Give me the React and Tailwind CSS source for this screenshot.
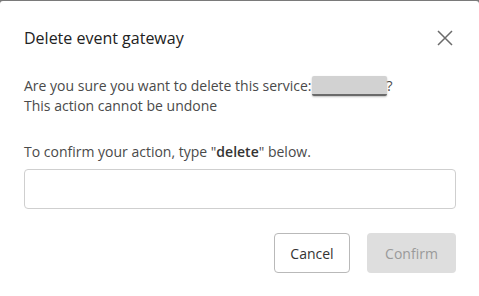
export default function App() {
  return (
    <div className="w-[479px] h-[296px] bg-[#7a7a7a] pt-px overflow-hidden" style={{ fontFamily: '"Open Sans", sans-serif' }}>
      <div className="h-[300px] bg-white rounded-[3px] pl-6 pr-[23px]">
        <div className="flex items-center justify-between h-[75px] pb-px">
          <h1 className="text-[16px] text-[#222] leading-none">Delete event gateway</h1>
          <button className="w-[16px] h-[16px] mr-[3px] flex items-center justify-center text-[#6b6b6b]">
            <svg width="16" height="16" viewBox="0 0 16 16" fill="none" stroke="currentColor" strokeWidth="1.5">
              <path d="M1 1L15 15M15 1L1 15" />
            </svg>
          </button>
        </div>
        <div className="text-[14px] leading-[20px] text-[#4a4a4a]">
          <p className="flex items-center">
            Are you sure you want to delete this service:
            <span className="inline-block w-[75px] h-[20px] bg-[#d2d2d2] border-b-2 border-[#6a6a6a] rounded-[2px] shadow-[0_1px_2px_rgba(0,0,0,0.25)]" />
            ?
          </p>
          <p>This action cannot be undone</p>
          <p className="mt-[26px]">
            To confirm your action, type "<span className="font-semibold text-[#333]">delete</span>" below.
          </p>
        </div>
        <input className="mt-[7px] w-full h-[40px] border border-[#cfcfcf] rounded-[4px] outline-none px-3 text-[14px]" />
        <div className="flex justify-end gap-[17px] mt-[24px]">
          <button className="w-[76px] h-[40px] border border-[#b9b9b9] rounded-[4px] text-[14px] text-[#333] bg-white">Cancel</button>
          <button className="w-[89px] h-[40px] rounded-[4px] text-[14px] text-[#9a9a9a] bg-[#dedede]">Confirm</button>
        </div>
      </div>
    </div>
  );
}
